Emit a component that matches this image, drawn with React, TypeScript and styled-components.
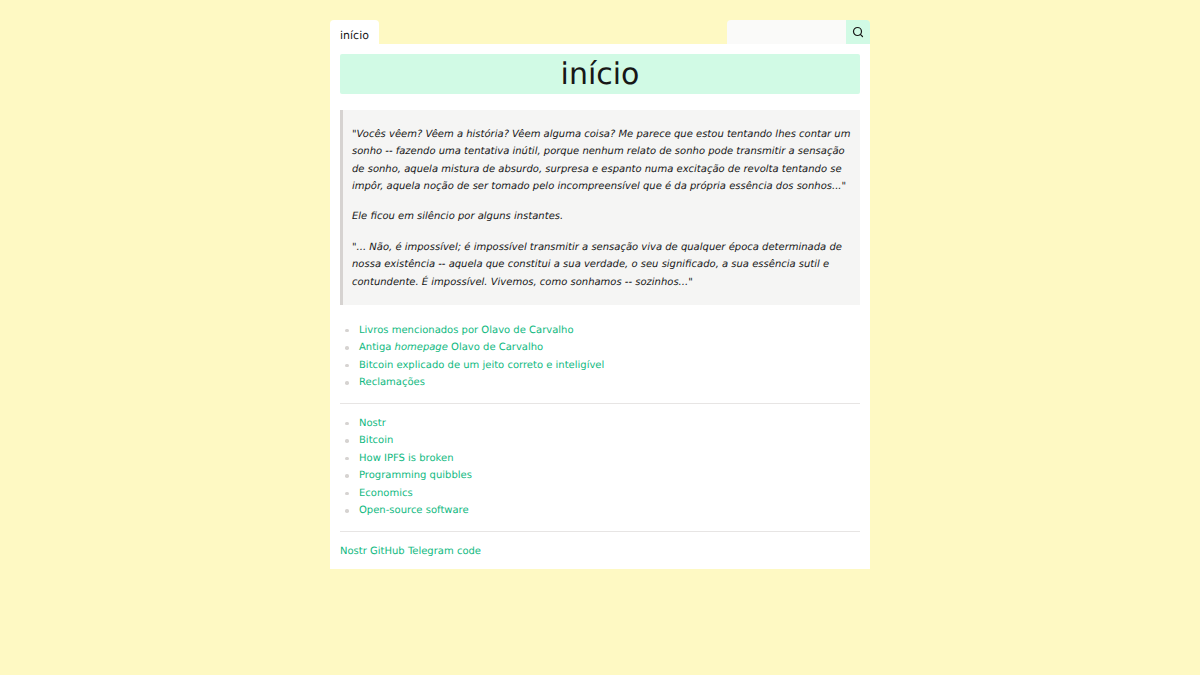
import styled, { createGlobalStyle } from "styled-components";
import { Search } from "lucide-react";

const GlobalStyle = createGlobalStyle`
  html, body {
    margin: 0;
    padding: 0;
    background: #fef9c3;
    font-family: "DejaVu Sans", sans-serif;
    color: #171717;
    text-rendering: geometricPrecision;
  }
`;

const Page = styled.div`
  width: 540px;
  margin: 0 auto;
  padding-top: 20px;
`;

const TopBar = styled.nav`
  display: flex;
  justify-content: space-between;
  align-items: stretch;
  height: 24px;
`;

const Tab = styled.a`
  display: flex;
  align-items: center;
  padding: 6px 10px 0;
  background: #fff;
  border-radius: 4px 4px 0 0;
  font-size: 11px;
`;

const SearchForm = styled.form`
  display: flex;
  width: 143px;
`;

const SearchInput = styled.input`
  width: 119px;
  border: 0;
  padding: 0;
  outline: 0;
  background: #fafaf9;
  border-radius: 4px 0 0 0;
`;

const SearchButton = styled.button`
  width: 24px;
  border: 0;
  padding: 0;
  display: flex;
  align-items: center;
  justify-content: center;
  background: #d1fae5;
  color: #171717;
  border-radius: 0 4px 0 0;
`;

const Main = styled.main`
  background: #fff;
  padding: 10px 10px 9px;
`;

const Title = styled.h1`
  margin: 0 0 16px;
  height: 40px;
  line-height: 41px;
  background: #d1fae5;
  border-radius: 2px;
  text-align: center;
  font-size: 30px;
  font-weight: 400;
`;

const Quote = styled.blockquote`
  margin: 0 0 16.5px;
  padding: 15.5px 8px 14px 9px;
  background: #f5f5f4;
  border-left: 3px solid #d6d3d1;
  font-size: 10px;
  font-style: italic;
  line-height: 17.5px;
`;

const QuoteText = styled.p`
  margin: 0 0 12.75px;
  &:last-child {
    margin-bottom: 0;
  }
`;

const LinkList = styled.ul`
  margin: 0;
  padding: 0 0 0 5px;
  list-style: none;
  line-height: 17.5px;
  font-size: 10px;
`;

const LinkItem = styled.li`
  display: flex;
  align-items: center;
  &::before {
    content: "";
    width: 3.5px;
    height: 3.5px;
    margin-right: 10.5px;
    border-radius: 50%;
    background: #d6d3d1;
  }
`;

const Link = styled.a`
  color: #10b981;
`;

const Divider = styled.hr`
  margin: 11.5px 0 10.5px;
  border: 0;
  border-top: 1px solid #e7e5e4;
`;

const FooterLinks = styled.div`
  display: flex;
  gap: 3.2px;
  font-size: 10px;
  line-height: 17.5px;
`;

const firstLinks = [
  <>Livros mencionados por Olavo de Carvalho</>,
  <>Antiga <em>homepage</em> Olavo de Carvalho</>,
  <>Bitcoin explicado de um jeito correto e inteligível</>,
  <>Reclamações</>,
];

const secondLinks = ["Nostr", "Bitcoin", "How IPFS is broken", "Programming quibbles", "Economics", "Open-source software"];

const footerLinks = ["Nostr", "GitHub", "Telegram", "code"];

export default function App() {
  return (
    <Page>
      <GlobalStyle />
      <TopBar>
        <Tab>início</Tab>
        <SearchForm>
          <SearchInput />
          <SearchButton type="button">
            <Search size={12} strokeWidth={2.4} />
          </SearchButton>
        </SearchForm>
      </TopBar>
      <Main>
        <Title>início</Title>
        <Quote>
          <QuoteText>
            "Vocês vêem? Vêem a história? Vêem alguma coisa? Me parece que estou tentando lhes contar um sonho -- fazendo uma tentativa inútil, porque nenhum relato de sonho pode transmitir a sensação de sonho, aquela mistura de absurdo, surpresa e espanto numa excitação de revolta tentando se impôr, aquela noção de ser tomado pelo incompreensível que é da própria essência dos sonhos..."
          </QuoteText>
          <QuoteText>Ele ficou em silêncio por alguns instantes.</QuoteText>
          <QuoteText>
            "... Não, é impossível; é impossível transmitir a sensação viva de qualquer época determinada de nossa existência -- aquela que constitui a sua verdade, o seu significado, a sua essência sutil e contundente. É impossível. Vivemos, como sonhamos -- sozinhos..."
          </QuoteText>
        </Quote>
        <LinkList>
          {firstLinks.map((label, i) => (
            <LinkItem key={i}><Link>{label}</Link></LinkItem>
          ))}
        </LinkList>
        <Divider />
        <LinkList>
          {secondLinks.map((label) => (
            <LinkItem key={label}><Link>{label}</Link></LinkItem>
          ))}
        </LinkList>
        <Divider />
        <FooterLinks>
          {footerLinks.map((label) => (
            <Link key={label}>{label}</Link>
          ))}
        </FooterLinks>
      </Main>
    </Page>
  );
}
